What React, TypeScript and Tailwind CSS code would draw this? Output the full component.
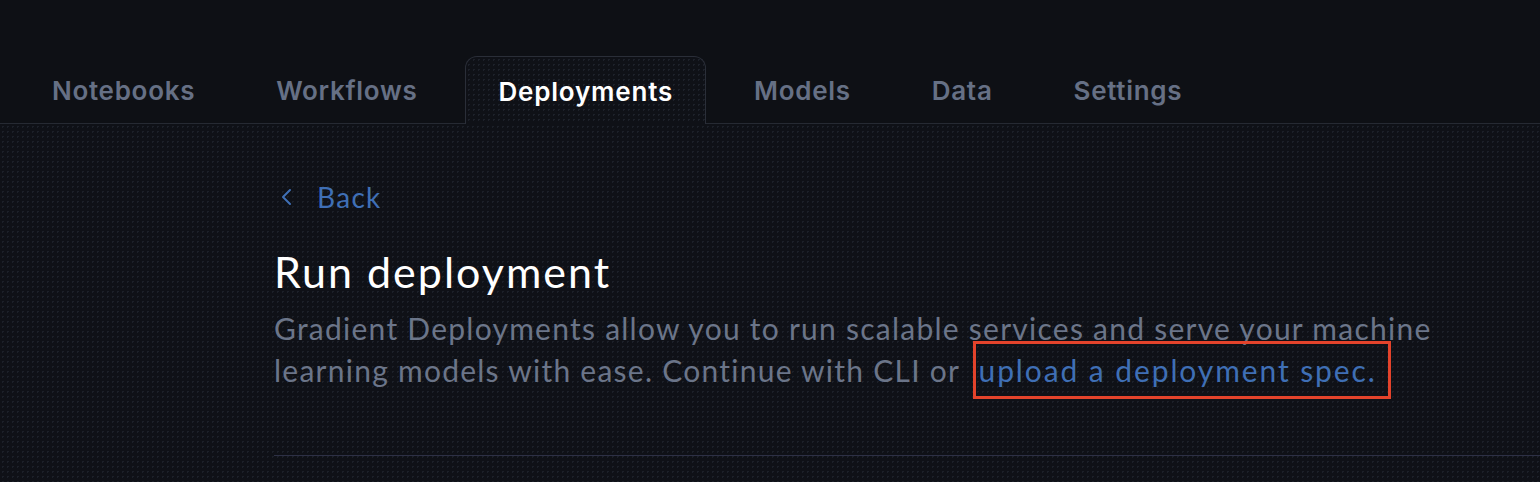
import React from 'react';

const tabs = ['Notebooks', 'Workflows', 'Deployments', 'Models', 'Data', 'Settings'];

export default function App() {
  const active = 'Deployments';

  return (
    <div className="w-[1540px] h-[482px] overflow-hidden bg-[#0e1015] flex flex-col">
      {/* tab bar */}
      <div className="h-[124px] flex items-end border-b border-[#262a33] pl-[19px] gap-[15px] font-['Inter',sans-serif]">
        {tabs.map((t) => (
          <div
            key={t}
            className={
              t === active
                ? 'h-[68px] -mb-px px-[32px] pt-[2px] flex items-center rounded-t-[12px] border border-b-0 border-[#2a2e38] text-white text-[26px] tracking-[0.8px] font-semibold bg-[#0f1117] bg-[radial-gradient(#1d212a_1px,transparent_1px)] bg-[length:5px_5px]'
                : 'h-[68px] px-[33px] pt-[2px] flex items-center text-[26px] tracking-[0.7px] font-semibold text-[#667085]'
            }
          >
            {t}
          </div>
        ))}
      </div>

      {/* content */}
      <div className="flex-1 bg-[#0f1117] bg-[radial-gradient(#1c2029_1px,transparent_1px)] bg-[length:5px_5px] pl-[274px] pt-[56px] font-['Lato',sans-serif]">
        <div className="flex items-center gap-[22px] text-[#3f6fb5] text-[28px] tracking-[1.3px] leading-[34px] pl-[5px]">
          <svg width="16" height="18" viewBox="0 0 16 18" fill="none">
            <path d="M11 2 L4 9 L11 16" stroke="#3f6fb5" strokeWidth="2" strokeLinecap="round" strokeLinejoin="round" />
          </svg>
          <span>Back</span>
        </div>

        <h1 className="mt-[32px] text-white text-[43px] tracking-[2px] leading-[52px] font-normal">Run deployment</h1>

        <p className="mt-[9px] max-w-[1200px] text-[#6b7589] text-[30px] tracking-[1.25px] leading-[42px]">
          Gradient Deployments allow you to run scalable services and serve your machine learning models with ease. Continue with CLI or{' '}
          <span className="ml-[4px] text-[#3f6fb5] tracking-[1.9px] border-[3px] border-[#e3432b] py-[8px] pl-[3px] pr-[11px]">upload a deployment spec.</span>
        </p>

        <div className="mt-[64px] h-px bg-[#2d3045]" />
      </div>
    </div>
  );
}
